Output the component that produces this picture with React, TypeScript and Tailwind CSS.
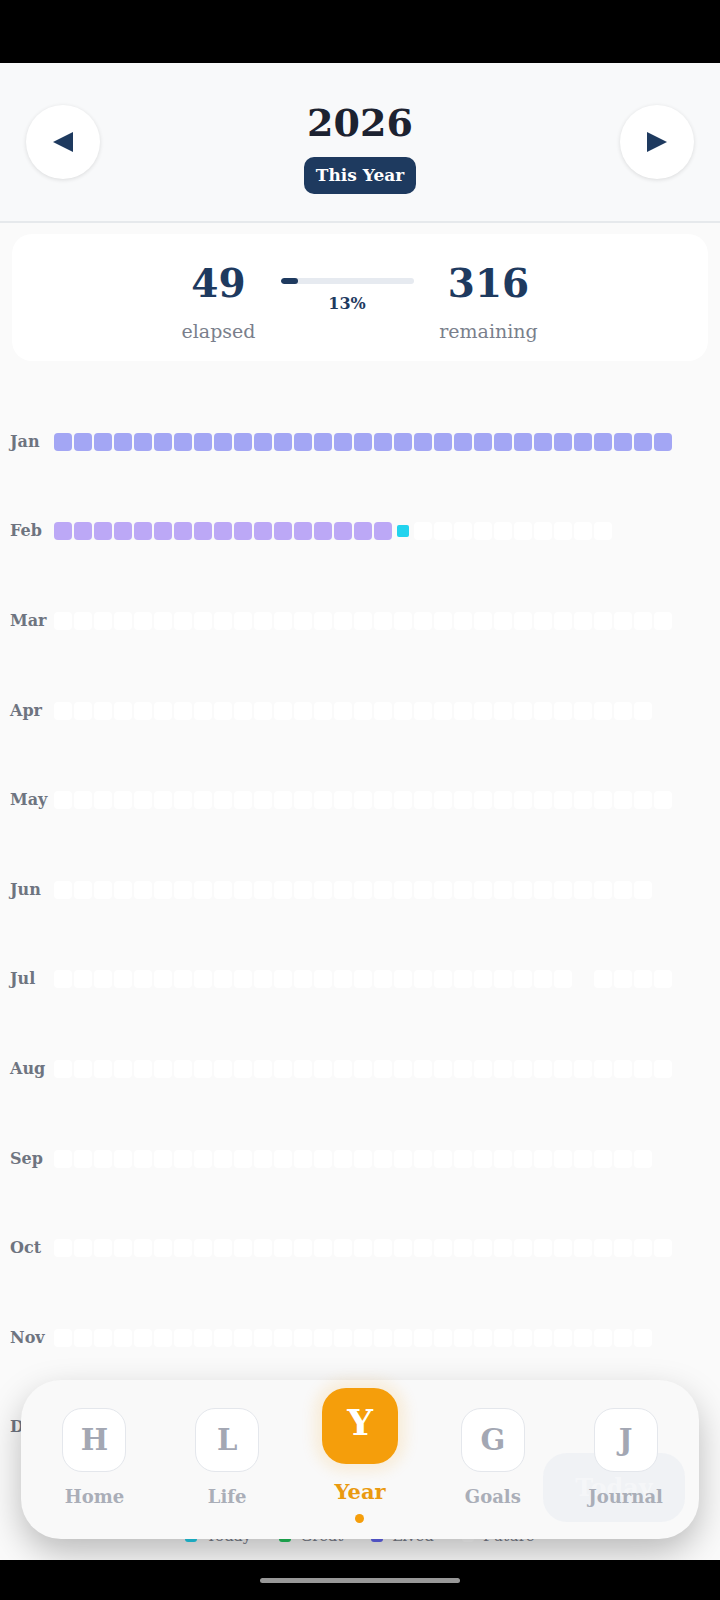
import React from "react";

const months: [string, number][] = [
  ["Jan", 31],
  ["Feb", 28],
  ["Mar", 31],
  ["Apr", 30],
  ["May", 31],
  ["Jun", 30],
  ["Jul", 31],
  ["Aug", 31],
  ["Sep", 30],
  ["Oct", 31],
  ["Nov", 30],
  ["Dec", 31],
];

function Cell({ m, d }: { m: number; d: number }) {
  if (m === 0) return <div className="w-[18px] h-[18px] rounded-[4px] bg-[#a3a6f4] shrink-0" />;
  if (m === 1 && d < 17) return <div className="w-[18px] h-[18px] rounded-[4px] bg-[#bca8f6] shrink-0" />;
  if (m === 1 && d === 17)
    return (
      <div className="w-[18px] h-[18px] shrink-0 flex items-center justify-center">
        <div className="w-[12px] h-[12px] rounded-[2px] bg-[#22d3ee]" />
      </div>
    );
  if (m === 6 && d === 26) return <div className="w-[18px] h-[18px] shrink-0" />;
  return <div className="w-[18px] h-[18px] rounded-[4px] bg-white shrink-0" />;
}

function NavItem({ letter, label }: { letter: string; label: string }) {
  return (
    <div className="flex flex-col items-center pt-[28px]">
      <div className="w-[64px] h-[64px] rounded-[20px] bg-white border-[1.5px] border-[#e4e7ec] flex items-center justify-center text-[29px] font-bold text-[#a3a7b3] leading-none">
        {letter}
      </div>
      <div className="mt-[13px] text-[18px] leading-[24px] text-[#aaaeb8] font-bold whitespace-nowrap">{label}</div>
    </div>
  );
}

export default function App() {
  return (
    <div className="w-[720px] h-[1600px] relative overflow-hidden bg-[#fafafa] flex flex-col [font-family:'DejaVu_Serif',serif]">
      <div className="h-[63px] bg-black shrink-0" />
      <div className="h-[160px] shrink-0 bg-[#f8f9fa] border-b-2 border-[#e6e9ec] flex items-center justify-between px-[26px]">
        <button className="w-[74px] h-[74px] rounded-full bg-white shadow-[0_1px_4px_rgba(0,0,0,0.12)] flex items-center justify-center">
          <svg width="22" height="22" viewBox="0 0 22 22">
            <polygon points="1,11 21,1 21,21" fill="#1e3a5f" />
          </svg>
        </button>
        <div className="flex flex-col items-center pt-[9px]">
          <div className="text-[38px] leading-[48px] font-bold text-[#1c2230]">2026</div>
          <div className="mt-[10px] h-[37px] px-[12px] rounded-[10px] bg-[#1e3a5f] text-white text-[17px] font-bold flex items-center whitespace-nowrap">
            This Year
          </div>
        </div>
        <button className="w-[74px] h-[74px] rounded-full bg-white shadow-[0_1px_4px_rgba(0,0,0,0.12)] flex items-center justify-center">
          <svg width="22" height="22" viewBox="0 0 22 22">
            <polygon points="21,11 1,1 1,21" fill="#1e3a5f" />
          </svg>
        </button>
      </div>

      <div className="flex-1 overflow-hidden flex flex-col">
        <div className="mt-[11px] mx-[12px] h-[127px] shrink-0 rounded-[20px] bg-white flex justify-center items-start pt-[27px] gap-[28px]">
          <div className="w-[68px] flex flex-col items-center">
            <div className="text-[39px] leading-[44px] font-bold text-[#1e3a5f] whitespace-nowrap">49</div>
            <div className="mt-[14px] text-[19px] leading-[24px] text-[#7a7f8c] whitespace-nowrap">elapsed</div>
          </div>
          <div className="w-[133px] flex flex-col items-center mt-[17px]">
            <div className="w-full h-[6px] rounded-full bg-[#e6eaf0] overflow-hidden">
              <div className="h-full w-[13%] rounded-full bg-[#1e3a5f]" />
            </div>
            <div className="mt-[10px] text-[16px] leading-[20px] font-bold text-[#1e3a5f]">13%</div>
          </div>
          <div className="w-[94px] flex flex-col items-center">
            <div className="text-[39px] leading-[44px] font-bold text-[#1e3a5f] whitespace-nowrap">316</div>
            <div className="mt-[14px] text-[19px] leading-[24px] text-[#7a7f8c] whitespace-nowrap">remaining</div>
          </div>
        </div>

        <div className="mt-[36px] flex flex-col shrink-0">
          {months.map(([name, days], m) => (
            <div key={name} className="h-[89.6px] flex items-center px-[10px]">
              <div className="w-[44px] shrink-0 text-[16px] font-bold text-[#6e7480]">{name}</div>
              <div className="flex gap-[2px]">
                {Array.from({ length: days }, (_, d) => (
                  <Cell key={d} m={m} d={d} />
                ))}
              </div>
            </div>
          ))}
        </div>

        <div className="mt-[52px] h-[24px] shrink-0 flex justify-center items-center gap-[28px] text-[15px] text-[#7a7f8c]">
          <div className="flex items-center gap-[9px]">
            <div className="w-[12px] h-[12px] rounded-[3px] bg-[#22d3ee]" />
            <span>Today</span>
          </div>
          <div className="flex items-center gap-[9px]">
            <div className="w-[12px] h-[12px] rounded-[3px] bg-[#22c55e]" />
            <span>Great</span>
          </div>
          <div className="flex items-center gap-[9px]">
            <div className="w-[12px] h-[12px] rounded-[3px] bg-[#6366f1]" />
            <span>Lived</span>
          </div>
          <div className="flex items-center gap-[9px]">
            <div className="w-[12px] h-[12px] rounded-[3px] bg-white" />
            <span>Future</span>
          </div>
        </div>
      </div>

      <div className="h-[40px] shrink-0 bg-black flex items-center justify-center">
        <div className="w-[200px] h-[5px] rounded-full bg-[#9a9a9a]" />
      </div>

      <div className="absolute left-[21px] top-[1380px] w-[678px] h-[159px] rounded-[40px] bg-[#f9f9f9] shadow-[0_14px_36px_-2px_rgba(0,0,0,0.28)]">
        <div className="absolute left-[522px] top-[73px] w-[142px] h-[69px] rounded-[24px] bg-[#e4e9ef]/40 flex items-center justify-center text-[24px] font-bold text-white/40">
          Today
        </div>
        <div className="relative grid grid-cols-5 px-[7px] h-full">
          <NavItem letter="H" label="Home" />
          <NavItem letter="L" label="Life" />
          <div className="flex flex-col items-center pt-[8px]">
            <div className="w-[76px] h-[76px] rounded-[24px] bg-[#f59e0b] shadow-[0_0_14px_8px_rgba(245,158,11,0.12)] flex items-center justify-center text-[36px] font-bold text-white leading-none pb-[8px]">
              Y
            </div>
            <div className="mt-[16px] text-[21px] leading-[24px] font-bold text-[#ea9a10]">Year</div>
            <div className="mt-[10px] w-[9px] h-[9px] rounded-full bg-[#f59e0b]" />
          </div>
          <NavItem letter="G" label="Goals" />
          <NavItem letter="J" label="Journal" />
        </div>
      </div>
    </div>
  );
}
